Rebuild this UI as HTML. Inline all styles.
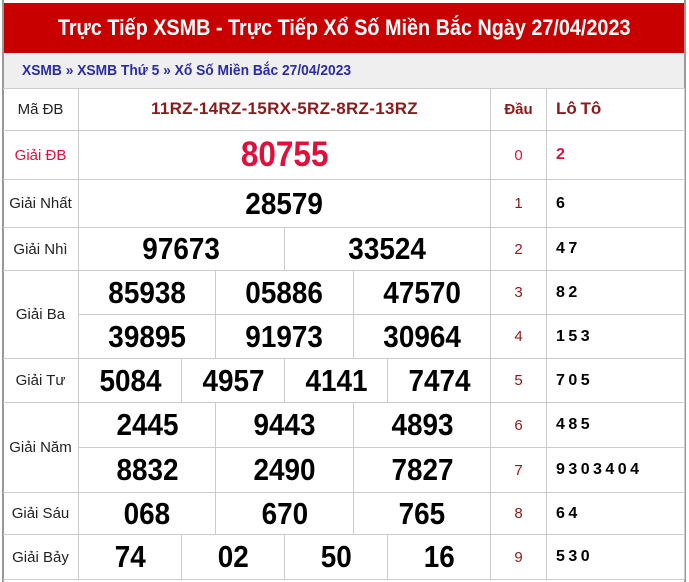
<!DOCTYPE html><html><head><meta charset="utf-8"><style>
*{margin:0;padding:0;box-sizing:border-box}
body{width:689px;height:582px;background:#fff;position:relative;overflow:hidden;font-family:"Liberation Sans",sans-serif}
.c{position:absolute;display:flex;align-items:center;justify-content:center;border-right:1px solid #ccc;border-bottom:1px solid #ccc;white-space:nowrap}
.c span{display:inline-block}
.l{font-size:15px;color:#222}
.n{font-size:31px;font-weight:bold;color:#000}
.n span{transform:scaleX(.9)}
.d{font-size:15px;color:#8b1a1a}
.t{justify-content:flex-start;padding-left:9px;font-size:16px;font-weight:bold;color:#000;word-spacing:-1px}
</style></head><body>
<div style="position:absolute;left:3px;top:3px;width:682px;height:50px;background:#c80000;color:#fff;font-weight:bold;font-size:22px;display:flex;align-items:center;justify-content:center;"><span style="transform:scaleX(.9);display:inline-block;white-space:nowrap">Trực Tiếp XSMB - Trực Tiếp Xổ Số Miền Bắc Ngày 27/04/2023</span></div>
<div style="position:absolute;left:3px;top:53px;width:682px;height:35px;background:#efefef;color:#2b2ba8;font-weight:bold;font-size:15px;display:flex;align-items:center;padding-left:19px"><span style="transform:scaleX(.92);transform-origin:left;display:inline-block;white-space:nowrap">XSMB » XSMB Thứ 5 » Xổ Số Miền Bắc 27/04/2023</span></div>
<div style="position:absolute;left:2px;top:0;width:2px;height:582px;background:#999"></div>
<div style="position:absolute;left:684px;top:0;width:2px;height:582px;background:#999"></div>
<div style="position:absolute;left:3px;top:88px;width:682px;height:1px;background:#ccc"></div>
<div id="g"></div>
<script>
var rows=[88,131,180,228,271,315,359,403,448,493,535,580];
var h='';
function cell(x1,y1,x2,y2,cls,txt,st){h+='<div class="c '+cls+'" style="left:'+x1+'px;top:'+y1+'px;width:'+(x2-x1)+'px;height:'+(y2-y1)+'px;'+(st||'')+'"><span>'+txt+'</span></div>';}
var L=[["Mã ĐB",0,1],["Giải ĐB",1,2,"color:#e0103a"],["Giải Nhất",2,3],["Giải Nhì",3,4],["Giải Ba",4,6],["Giải Tư",6,7],["Giải Năm",7,9],["Giải Sáu",9,10],["Giải Bảy",10,11]];
L.forEach(function(a){cell(3,rows[a[1]],79,rows[a[2]],'l',a[0],a[3]||'')});
cell(79,88,491,131,'','11RZ-14RZ-15RX-5RZ-8RZ-13RZ','font-size:17px;font-weight:bold;color:#8b1a1a;letter-spacing:.3px');
cell(79,131,491,180,'n','80755','color:#e0103a;font-size:35px');
cell(79,180,491,228,'n','28579');
function split(r,vals){var n=vals.length;for(var i=0;i<n;i++){var x1=Math.round(79+412*i/n),x2=Math.round(79+412*(i+1)/n);cell(x1,rows[r],x2,rows[r+1],'n',vals[i]);}}
split(3,["97673","33524"]);
split(4,["85938","05886","47570"]);
split(5,["39895","91973","30964"]);
split(6,["5084","4957","4141","7474"]);
split(7,["2445","9443","4893"]);
split(8,["8832","2490","7827"]);
split(9,["068","670","765"]);
split(10,["74","02","50","16"]);
cell(491,88,547,131,'','Đầu','font-size:15px;font-weight:bold;color:#8b1a1a');
cell(547,88,685,131,'t','Lô Tô','color:#8b1a1a;font-size:17px');
var lt=["2","6","4 7","8 2","1 5 3","7 0 5","4 8 5","9 3 0 3 4 0 4","6 4","5 3 0"];
for(var i=0;i<10;i++){cell(491,rows[i+1],547,rows[i+2],'d',String(i),i==0?'color:#e0103a':'');cell(547,rows[i+1],685,rows[i+2],'t',lt[i],i==0?'color:#e0103a':'');}
document.getElementById('g').innerHTML=h;
</script>
</body></html>
